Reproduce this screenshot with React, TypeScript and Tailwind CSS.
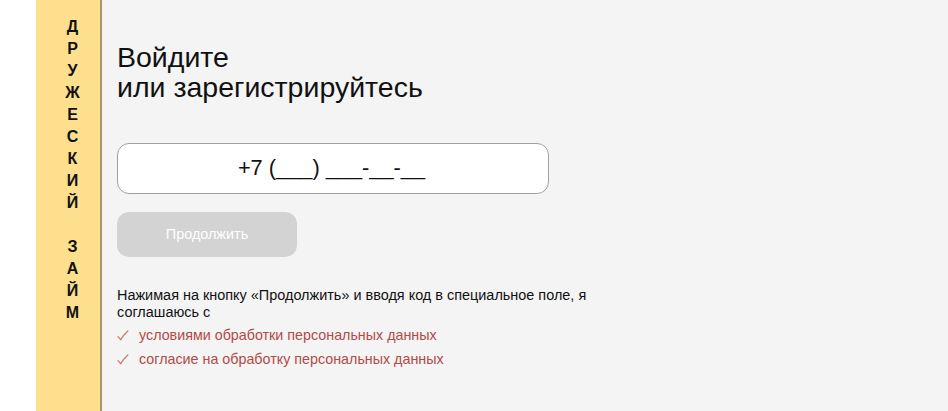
import React from "react";

const letters = ["Д", "Р", "У", "Ж", "Е", "С", "К", "И", "Й", "", "З", "А", "Й", "М"];

function Check() {
  return (
    <svg width="12" height="11" viewBox="0 0 12 11" className="shrink-0">
      <path d="M1 6.8 Q2.6 8 3.6 9.8 Q6.5 5 10.8 1" fill="none" stroke="#d07a75" strokeWidth="1.3" strokeLinecap="round" strokeLinejoin="round" />
    </svg>
  );
}

export default function App() {
  return (
    <div className="flex h-[411px] w-[948px] bg-white" style={{ fontFamily: '"Liberation Sans", Arial, sans-serif' }}>
      <div className="w-[36px] shrink-0 bg-white" />
      <div className="w-[66px] shrink-0 bg-[#fedf8d] border-r-2 border-[#a99573] flex flex-col items-center pt-[16px] pl-[9px]">
        {letters.map((l, i) => (
          <div key={i} className="h-[22px] leading-[22px] text-[16px] font-bold text-[#111]">
            {l}
          </div>
        ))}
      </div>
      <div className="flex-1 bg-[#f4f4f4] pl-[15px] pt-[42px]">
        <h1 className="text-[28.5px] leading-[30px] text-[#111] font-normal">
          Войдите
          <br />
          или зарегистрируйтесь
        </h1>
        <div className="mt-[41px] w-[432px] h-[51px] rounded-[12px] border border-[#a0a0a0] bg-white flex items-center justify-center text-[21.8px] text-[#111] pr-[3px]">
          +7 (___) ___-__-__
        </div>
        <div className="mt-[18px] w-[180px] h-[45px] rounded-[12px] bg-[#d3d3d3] flex items-center justify-center text-[14.4px] text-white">
          Продолжить
        </div>
        <p className="mt-[30px] w-[505px] text-[14.45px] leading-[17px] text-[#111]">
          Нажимая на кнопку «Продолжить» и вводя код в специальное поле, я соглашаюсь с
        </p>
        <div className="mt-[6px] flex items-center gap-[10px] text-[14.3px] leading-[17px] text-[#b24a45]">
          <Check />
          <span>условиями обработки персональных данных</span>
        </div>
        <div className="mt-[7px] flex items-center gap-[10px] text-[14.3px] leading-[17px] text-[#b24a45]">
          <Check />
          <span>согласие на обработку персональных данных</span>
        </div>
      </div>
    </div>
  );
}
